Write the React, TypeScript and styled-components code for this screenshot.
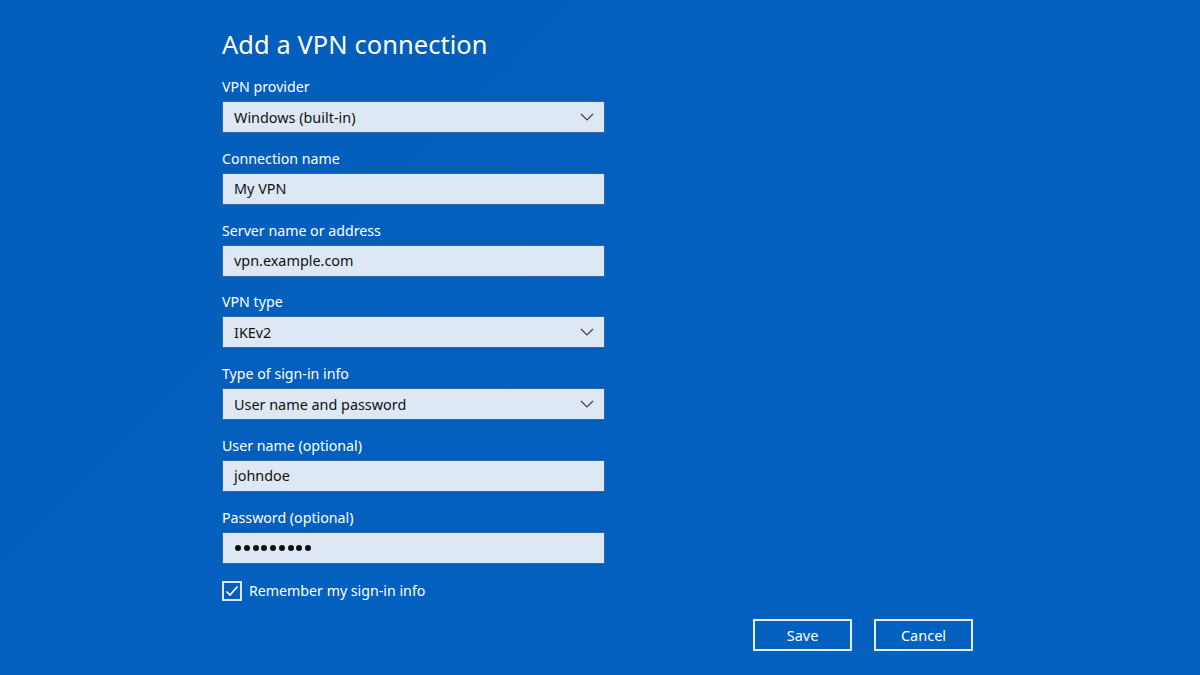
import React, { useState } from "react";
import styled, { createGlobalStyle } from "styled-components";

const GlobalStyle = createGlobalStyle`
  html, body {
    margin: 0;
    padding: 0;
    background: #0460bd;
  }
  body {
    font-family: "Noto Sans", "Open Sans", Arial, sans-serif;
    color: #fff;
  }
`;

const Page = styled.div`
  width: 1200px;
  height: 675px;
  box-sizing: border-box;
  padding: 26px 0 0 222px;
  background: linear-gradient(135deg, #035dba 0%, #0460bf 60%, #0461c0 100%);
  overflow: hidden;
`;

const Content = styled.div`
  width: 751px;
  display: flex;
  flex-direction: column;
`;

const Title = styled.h1`
  margin: 0 0 15px;
  font-size: 25.4px;
  line-height: 36px;
  font-weight: 400;
  letter-spacing: 0.1px;
`;

const Form = styled.div`
  width: 383px;
  display: flex;
  flex-direction: column;
  gap: 15.8px;
`;

const Field = styled.div`
  display: flex;
  flex-direction: column;
  gap: 4px;
`;

const Label = styled.label`
  font-size: 14.2px;
  line-height: 20px;
`;

const Box = styled.div`
  height: 32px;
  box-sizing: border-box;
  display: flex;
  align-items: center;
  justify-content: space-between;
  padding: 0 10px 0 11px;
  background: #dde8f4;
  border: 1px solid #2e67a8;
  color: #111;
  font-size: 14.4px;
`;

const Dots = styled.span`
  display: flex;
  gap: 2.75px;
  padding-left: 1px;
`;

const Dot = styled.span`
  width: 6px;
  height: 6px;
  border-radius: 50%;
  background: #111;
`;

const CheckRow = styled.label`
  display: flex;
  align-items: center;
  gap: 7px;
  margin-top: 17px;
  font-size: 14.2px;
  line-height: 20px;
  cursor: pointer;
`;

const CheckBox = styled.span`
  width: 20px;
  height: 20px;
  box-sizing: border-box;
  border: 2px solid #dce8f5;
  display: flex;
  align-items: center;
  justify-content: center;
`;

const Actions = styled.div`
  display: flex;
  justify-content: flex-end;
  gap: 22px;
  margin-top: 18px;
`;

const Button = styled.button`
  width: 99px;
  height: 32px;
  box-sizing: border-box;
  border: 2px solid #e6eef8;
  background: transparent;
  color: #fff;
  font-family: inherit;
  font-size: 14.5px;
  cursor: pointer;
`;

const Chevron = () => (
  <svg width="14" height="8" viewBox="0 0 14 8" fill="none">
    <path d="M1 1l6 6 6-6" stroke="#3b3b3b" strokeWidth="1.1" />
  </svg>
);

type FieldProps = {
  label: string;
  value?: string;
  select?: boolean;
  secret?: number;
};

const FormField = ({ label, value, select, secret }: FieldProps) => (
  <Field>
    <Label>{label}</Label>
    <Box>
      {secret ? (
        <Dots>
          {Array.from({ length: secret }).map((_, i) => (
            <Dot key={i} />
          ))}
        </Dots>
      ) : (
        <span>{value}</span>
      )}
      {select && <Chevron />}
    </Box>
  </Field>
);

export default function App() {
  const [remember, setRemember] = useState(true);

  return (
    <Page>
      <GlobalStyle />
      <Content>
        <Title>Add a VPN connection</Title>
        <Form>
          <FormField label="VPN provider" value="Windows (built-in)" select />
          <FormField label="Connection name" value="My VPN" />
          <FormField label="Server name or address" value="vpn.example.com" />
          <FormField label="VPN type" value="IKEv2" select />
          <FormField
            label="Type of sign-in info"
            value="User name and password"
            select
          />
          <FormField label="User name (optional)" value="johndoe" />
          <FormField label="Password (optional)" secret={9} />
        </Form>
        <CheckRow onClick={() => setRemember(!remember)}>
          <CheckBox>
            {remember && (
              <svg width="14" height="12" viewBox="0 0 14 12" fill="none">
                <path d="M1.5 6.5l3.5 3.5 7.5-8.5" stroke="#fff" strokeWidth="1.6" />
              </svg>
            )}
          </CheckBox>
          Remember my sign-in info
        </CheckRow>
        <Actions>
          <Button>Save</Button>
          <Button>Cancel</Button>
        </Actions>
      </Content>
    </Page>
  );
}
